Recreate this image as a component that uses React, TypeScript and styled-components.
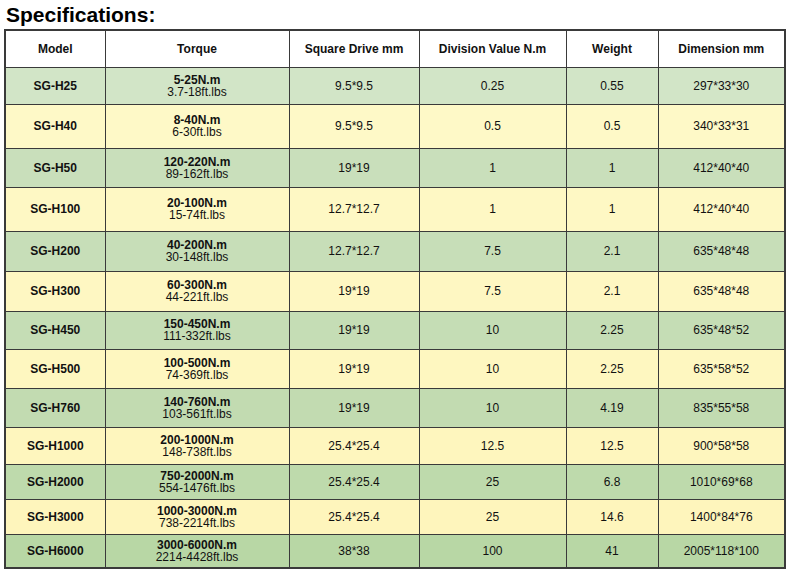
import React from "react";
import styled, { createGlobalStyle } from "styled-components";

const Global = createGlobalStyle`
  html, body { margin: 0; padding: 0; background: #ffffff; }
  body { font-family: "Liberation Sans", Arial, sans-serif; color: #111; }
`;

const Page = styled.div`
  width: 791px;
  padding-left: 4px;
  box-sizing: border-box;
`;

const Title = styled.h1`
  margin: 0 0 2px 2px;
  padding-top: 3px;
  height: 24px;
  font-size: 21px;
  line-height: 24px;
  font-weight: bold;
  color: #000;
`;

const Table = styled.table`
  border-collapse: collapse;
  width: 780px;
  table-layout: fixed;
  border: 2px solid #3a3a3a;
`;

const HeadCell = styled.th`
  background: #ffffff;
  border: 1px solid #3a3a3a;
  font-size: 12px;
  font-weight: bold;
  color: #111;
  text-align: center;
  padding: 0;
`;

const Row = styled.tr<{ $bg: string; $h: number }>`
  height: ${(p) => p.$h}px;
  background: ${(p) => p.$bg};
`;

const Cell = styled.td<{ $bold?: boolean }>`
  border: 1px solid #3a3a3a;
  font-size: 12px;
  font-weight: ${(p) => (p.$bold ? "bold" : "normal")};
  text-align: center;
  vertical-align: middle;
  padding: 0;
  color: #111;
`;

const TorqueTop = styled.div`
  font-weight: bold;
  line-height: 12px;
`;

const TorqueBottom = styled.div`
  line-height: 12px;
`;

type Item = {
  model: string;
  nm: string;
  ft: string;
  drive: string;
  div: string;
  weight: string;
  dim: string;
  h: number;
  bg: string;
};

const items: Item[] = [
  { model: "SG-H25", nm: "5-25N.m", ft: "3.7-18ft.lbs", drive: "9.5*9.5", div: "0.25", weight: "0.55", dim: "297*33*30", h: 37, bg: "#d2e5c7" },
  { model: "SG-H40", nm: "8-40N.m", ft: "6-30ft.lbs", drive: "9.5*9.5", div: "0.5", weight: "0.5", dim: "340*33*31", h: 44, bg: "#fef9c7" },
  { model: "SG-H50", nm: "120-220N.m", ft: "89-162ft.lbs", drive: "19*19", div: "1", weight: "1", dim: "412*40*40", h: 39, bg: "#c9dfbb" },
  { model: "SG-H100", nm: "20-100N.m", ft: "15-74ft.lbs", drive: "12.7*12.7", div: "1", weight: "1", dim: "412*40*40", h: 44, bg: "#fef8c4" },
  { model: "SG-H200", nm: "40-200N.m", ft: "30-148ft.lbs", drive: "12.7*12.7", div: "7.5", weight: "2.1", dim: "635*48*48", h: 40, bg: "#c7deb8" },
  { model: "SG-H300", nm: "60-300N.m", ft: "44-221ft.lbs", drive: "19*19", div: "7.5", weight: "2.1", dim: "635*48*48", h: 40, bg: "#fef7c2" },
  { model: "SG-H450", nm: "150-450N.m", ft: "111-332ft.lbs", drive: "19*19", div: "10", weight: "2.25", dim: "635*48*52", h: 38, bg: "#c5ddb5" },
  { model: "SG-H500", nm: "100-500N.m", ft: "74-369ft.lbs", drive: "19*19", div: "10", weight: "2.25", dim: "635*58*52", h: 39, bg: "#fef7c0" },
  { model: "SG-H760", nm: "140-760N.m", ft: "103-561ft.lbs", drive: "19*19", div: "10", weight: "4.19", dim: "835*55*58", h: 39, bg: "#c2dbb1" },
  { model: "SG-H1000", nm: "200-1000N.m", ft: "148-738ft.lbs", drive: "25.4*25.4", div: "12.5", weight: "12.5", dim: "900*58*58", h: 37, bg: "#fef6be" },
  { model: "SG-H2000", nm: "750-2000N.m", ft: "554-1476ft.lbs", drive: "25.4*25.4", div: "25", weight: "6.8", dim: "1010*69*68", h: 35, bg: "#bedaac" },
  { model: "SG-H3000", nm: "1000-3000N.m", ft: "738-2214ft.lbs", drive: "25.4*25.4", div: "25", weight: "14.6", dim: "1400*84*76", h: 35, bg: "#fef5bc" },
  { model: "SG-H6000", nm: "3000-6000N.m", ft: "2214-4428ft.lbs", drive: "38*38", div: "100", weight: "41", dim: "2005*118*100", h: 34, bg: "#b8d7a5" },
];

const widths = [100, 184, 130, 147, 92, 127];
const heads = ["Model", "Torque", "Square Drive mm", "Division Value N.m", "Weight", "Dimension mm"];

export default function App() {
  return (
    <Page>
      <Global />
      <Title>Specifications:</Title>
      <Table>
        <colgroup>
          {widths.map((w, i) => (
            <col key={i} style={{ width: w }} />
          ))}
        </colgroup>
        <thead>
          <Row $bg="#ffffff" $h={37}>
            {heads.map((h) => (
              <HeadCell key={h}>{h}</HeadCell>
            ))}
          </Row>
        </thead>
        <tbody>
          {items.map((it) => (
            <Row key={it.model} $bg={it.bg} $h={it.h}>
              <Cell $bold>{it.model}</Cell>
              <Cell>
                <TorqueTop>{it.nm}</TorqueTop>
                <TorqueBottom>{it.ft}</TorqueBottom>
              </Cell>
              <Cell>{it.drive}</Cell>
              <Cell>{it.div}</Cell>
              <Cell>{it.weight}</Cell>
              <Cell>{it.dim}</Cell>
            </Row>
          ))}
        </tbody>
      </Table>
    </Page>
  );
}
